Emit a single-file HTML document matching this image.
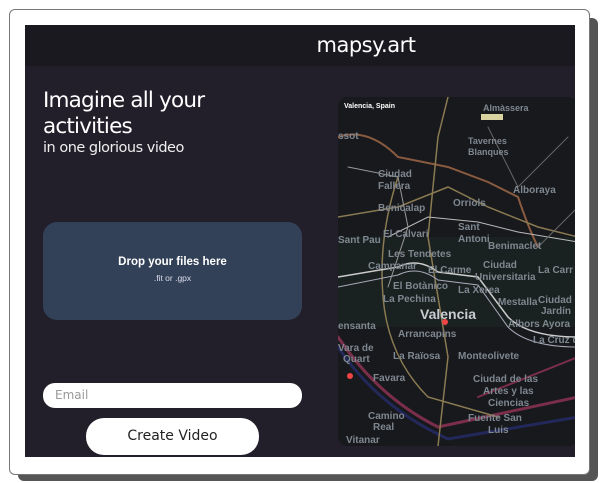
<!DOCTYPE html>
<html><head><meta charset="utf-8"><style>
*{margin:0;padding:0;box-sizing:border-box}
body{width:600px;height:483px;background:#fff;position:relative;overflow:hidden;font-family:"Liberation Sans","DejaVu Sans",sans-serif}
.shadow{position:absolute;left:18px;top:18px;width:580px;height:463px;background:#555;border-radius:6px}
.card{position:absolute;left:9px;top:9px;width:581px;height:466px;background:#fff;border:1px solid #777;border-radius:6px}
.inner{position:absolute;left:25px;top:25px;width:550px;height:432px;background:#221f2a;overflow:hidden}
.hdr{position:absolute;left:0;top:0;width:550px;height:41px;background:#1a1920;color:#fff;font-size:21px;text-align:center;padding-left:132px;line-height:40px;font-family:"DejaVu Sans",sans-serif;letter-spacing:-0.5px}
.h1{position:absolute;left:18px;top:63px;color:#fff;font-size:21.5px;line-height:26px;font-family:"DejaVu Sans",sans-serif;letter-spacing:-0.8px}
.h2{position:absolute;left:18px;top:115px;color:#eee;font-size:14.5px;font-family:"DejaVu Sans",sans-serif;letter-spacing:-0.5px}
.drop{position:absolute;left:18px;top:197px;width:259px;height:98px;background:#324157;border-radius:14px;text-align:center;color:#fff}
.drop b{display:block;margin-top:34px;font-size:11.5px}
.drop span{display:block;margin-top:5px;font-size:8.5px;color:#dde}
.email{position:absolute;left:18px;top:358px;width:259px;height:25px;background:#fff;border-radius:12px;color:#999;font-size:12px;line-height:25px;padding-left:12px;font-family:"DejaVu Sans",sans-serif}
.btn{position:absolute;left:61px;top:393px;width:173px;height:37px;background:#fff;border-radius:18px;text-align:center;line-height:37px;font-size:14px;color:#222;font-family:"DejaVu Sans",sans-serif}
.map{position:absolute;left:313px;top:72px;width:240px;height:349px;background:#17191c;border-radius:10px;overflow:hidden}
.map svg{position:absolute;left:0;top:0}
</style></head><body>
<div class="shadow"></div>
<div class="card"></div>
<div class="inner">
<div class="hdr">mapsy.art</div>
<div class="h1">Imagine all your<br>activities</div>
<div class="h2">in one glorious video</div>
<div class="drop"><b>Drop your files here</b><span>.fit or .gpx</span></div>
<div class="email">Email</div>
<div class="btn">Create Video</div>
<div class="map">
<svg width="240" height="349" viewBox="0 0 240 349">
<rect width="240" height="349" fill="#17191c"/>
<rect x="0" y="140" width="240" height="90" fill="#1d2624" opacity=".6"/>
<g fill="none" stroke-linecap="round">
<path d="M0 40 Q30 30 60 60 L110 70 L150 85 L180 100 Q190 130 200 150" stroke="#8a5a40" stroke-width="2"/>
<path d="M0 240 Q40 300 100 330 L240 300" stroke="#7a2e4a" stroke-width="3"/>
<path d="M0 250 Q40 310 110 342 L240 320" stroke="#23285a" stroke-width="3"/>
<path d="M60 80 Q40 140 45 200 Q50 260 90 300 L160 320" stroke="#8a7a52" stroke-width="1.5"/>
<path d="M0 120 L60 110 L110 90 L150 110 L200 130 L240 140" stroke="#8a7a52" stroke-width="1.5"/>
<path d="M110 0 L100 40 L95 90 L90 140 L100 200 L110 260 L100 349" stroke="#8a7a52" stroke-width="1.5"/>
<path d="M0 180 L60 170 Q80 160 100 175 L140 180 L170 220 Q190 240 240 240" stroke="#ccc" stroke-width="1.5"/>
<path d="M0 190 L60 178 Q80 168 100 183 L140 188 L170 230 Q190 250 240 250" stroke="#aab" stroke-width="1"/>
<path d="M50 140 L90 120 L140 125 L180 135 L240 145" stroke="#bbb" stroke-width="1"/>
<path d="M10 70 L60 80 L70 130 L50 190" stroke="#999" stroke-width="1"/>
<path d="M180 90 L230 40 M150 30 L180 90 M200 150 L240 110" stroke="#666" stroke-width="1"/>
<path d="M140 300 L240 260" stroke="#7a2e4a" stroke-width="2"/>
</g>
<g font-family="Liberation Sans,sans-serif" fill="#7f8790" font-weight="bold">
<text x="6" y="11" fill="#fff" font-size="7">Valencia, Spain</text>
<text x="145" y="14" font-size="9">Almàssera</text>
<text x="0" y="42" font-size="10">ssot</text>
<text x="130" y="47" font-size="9">Tavernes</text>
<text x="130" y="58" font-size="9">Blanques</text>
<text x="40" y="80" font-size="10">Ciudad</text>
<text x="40" y="92" font-size="10">Fallera</text>
<text x="175" y="96" font-size="10">Alboraya</text>
<text x="40" y="114" font-size="10">Benicalap</text>
<text x="115" y="109" font-size="10">Orriols</text>
<text x="0" y="146" font-size="10">Sant Pau</text>
<text x="45" y="140" font-size="10">El Calvari</text>
<text x="120" y="133" font-size="10">Sant</text>
<text x="120" y="145" font-size="10">Antoni</text>
<text x="150" y="152" font-size="10">Benimaclet</text>
<text x="50" y="160" font-size="10">Les Tendetes</text>
<text x="30" y="172" font-size="10">Campanar</text>
<text x="90" y="176" font-size="10">El Carme</text>
<text x="145" y="171" font-size="10">Ciudad</text>
<text x="137" y="183" font-size="10">Universitaria</text>
<text x="200" y="176" font-size="10">La Carr</text>
<text x="55" y="192" font-size="10">El Botànico</text>
<text x="120" y="196" font-size="10">La Xerea</text>
<text x="45" y="205" font-size="10">La Pechina</text>
<text x="160" y="208" font-size="10">Mestalla</text>
<text x="200" y="206" font-size="10">Ciudad</text>
<text x="203" y="217" font-size="10">Jardín</text>
<text x="82" y="222" font-size="14" fill="#c8cdd2">Valencia</text>
<text x="0" y="232" font-size="10">ensanta</text>
<text x="170" y="230" font-size="10">Albors Ayora</text>
<text x="60" y="240" font-size="10">Arrancapins</text>
<text x="0" y="254" font-size="10">Vara de</text>
<text x="5" y="265" font-size="10">Quart</text>
<text x="195" y="246" font-size="10">La Cruz de</text>
<text x="55" y="262" font-size="10">La Raïosa</text>
<text x="120" y="262" font-size="10">Monteolivete</text>
<text x="35" y="284" font-size="10">Favara</text>
<text x="135" y="285" font-size="10">Ciudad de las</text>
<text x="145" y="297" font-size="10">Artes y las</text>
<text x="150" y="309" font-size="10">Ciencias</text>
<text x="30" y="322" font-size="10">Camino</text>
<text x="35" y="333" font-size="10">Real</text>
<text x="130" y="324" font-size="10">Fuente San</text>
<text x="150" y="336" font-size="10">Luis</text>
<text x="8" y="346" font-size="10">Vitanar</text>
</g>
<circle cx="107" cy="225" r="3" fill="#e44"/>
<circle cx="12" cy="279" r="3" fill="#e44"/>
<rect x="143" y="17" width="22" height="6" fill="#d8d2a0"/>
</svg>
</div>
</div>
</body></html>
